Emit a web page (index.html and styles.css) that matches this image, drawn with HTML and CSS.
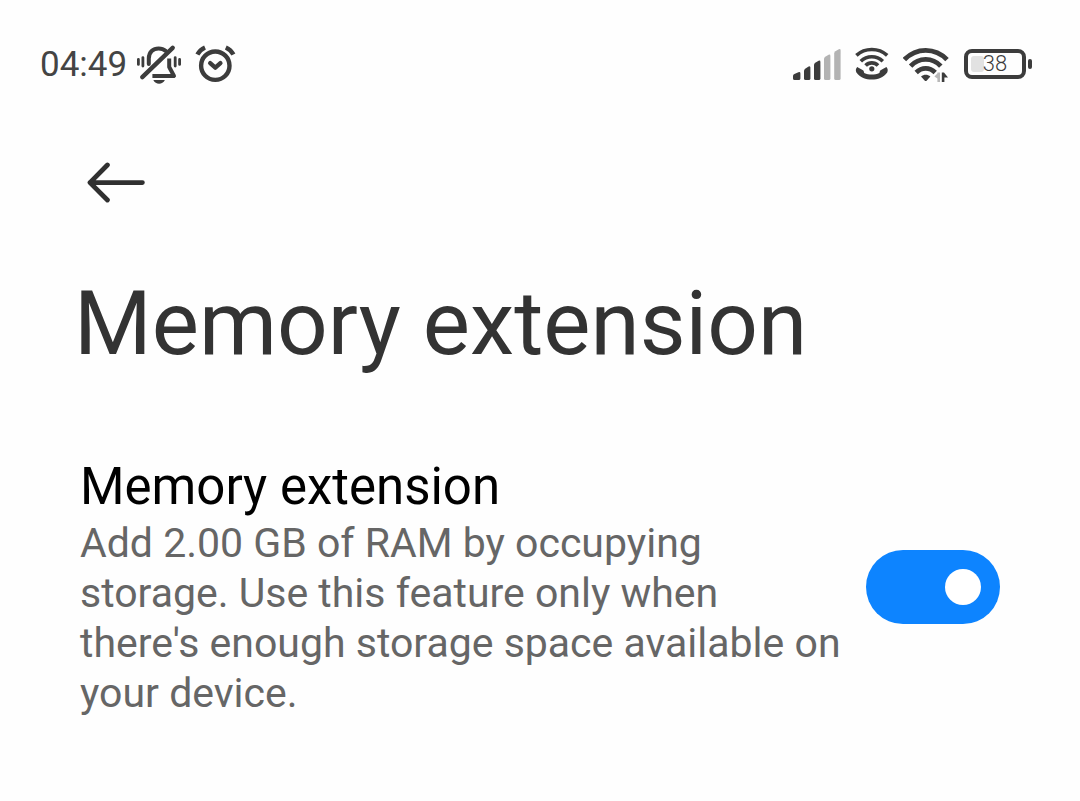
FILE: index.html
```html
<!DOCTYPE html>
<html lang="en">
<head>
    <meta charset="UTF-8">
    <meta name="viewport" content="width=device-width, initial-scale=1.0">
    <title>Memory extension</title>
    <link rel="stylesheet" href="styles.css">
</head>
<body>

    <!-- Status bar -->
    <div class="status-bar">
        <div class="status-left">
            <span class="time">04:49</span>
            <svg class="icon-bell" width="46" height="40" viewBox="0 0 46 40" fill="none" stroke="#3c3c3c" stroke-width="4" stroke-linecap="round">
                <path d="M12.8 20V14.5C12.8 8 17.2 4.4 22.6 4.4C25.5 4.4 28 5.4 29.8 7"/>
                <path d="M36.7 3.8L6.3 33.2" stroke-width="4.4"/>
                <path d="M33.2 14.5V23L38 32H16.4" stroke-linejoin="round" stroke-linecap="butt"/>
                <path d="M17.3 36H28.9C27.5 38.6 25.5 39.8 23.1 39.8C20.7 39.8 18.6 38.6 17.3 36Z" fill="#3c3c3c" stroke="none"/>
                <path d="M2.4 15.4V20.4M6.9 13.6V22M39.2 13.6V22M43.6 15.4V20.4" stroke-width="2.8"/>
            </svg>
            <svg class="icon-alarm" width="42" height="40" viewBox="0 0 42 40" fill="none" stroke="#3c3c3c" stroke-width="4.4">
                <circle cx="21.3" cy="21.7" r="14.2"/>
                <path d="M3.4 10.6C5 7.4 7.6 4.9 11 3.4M31.8 3.4C35.2 4.9 37.8 7.4 39.4 10.6"/>
                <path d="M16.2 19.2L21.3 23.6L26.4 19.2" stroke-linecap="round" stroke-linejoin="round"/>
            </svg>
        </div>
        <div class="status-right">
            <svg width="48" height="40" viewBox="0 0 48 40" fill="#3c3c3c">
                <path d="M0 32Q0 30.6 1.4 30L5.4 28.2Q7.4 27.4 7.4 29.4V34.4Q7.4 36 5.8 36H1.6Q0 36 0 34.4Z"/>
                <path d="M11 27Q11 25.6 12.2 24.8L15.6 22.6Q17.4 21.6 17.4 23.8V34.4Q17.4 36 15.8 36H12.6Q11 36 11 34.4Z"/>
                <path d="M21 21Q21 19.6 22.2 18.8L25.6 16.8Q27.4 16 27.4 18V34.4Q27.4 36 25.8 36H22.6Q21 36 21 34.4Z"/>
                <g fill="#b3b3b3">
                    <path d="M31 15Q31 13.6 32.2 12.8L35.6 10.8Q37.4 10 37.4 12V34.4Q37.4 36 35.8 36H32.6Q31 36 31 34.4Z"/>
                    <path d="M41.2 9.4Q41.2 8 42.4 7.2L45.8 5.2Q47.6 4.4 47.6 6.4V34.4Q47.6 36 46 36H42.8Q41.2 36 41.2 34.4Z"/>
                </g>
            </svg>
            <svg class="icon-call" width="34" height="40" viewBox="0 0 34 40" fill="none" stroke="#3c3c3c" stroke-width="3.6">
                <path d="M1.4 11.4C10 3.5 23.6 3.5 32.2 11.4"/>
                <path d="M5.8 17.2C12 11.2 21.6 11.2 27.8 17.2"/>
                <path d="M10.6 21.6C14 18 19.6 18 23 21.6"/>
                <circle cx="16.8" cy="24.8" r="2.6" fill="#3c3c3c" stroke="none"/>
                <path d="M2.2 23L8 26.2C8.8 26.8 9 27.8 9.2 29C14 31 19.6 31 24.4 29C24.6 27.8 24.8 26.8 25.6 26.2L31.4 23C32.8 24.4 33.2 26.8 32.2 28.4C24.8 38 8.8 38 1.4 28.4C.4 26.8 .8 24.4 2.2 23Z" fill="#3c3c3c" stroke="none"/>
            </svg>
            <svg class="icon-wifi" width="46" height="40" viewBox="0 0 46 40" fill="none" stroke="#3c3c3c" stroke-width="4.8">
                <path d="M1.4 15.6C13.2 3.2 32.2 3.2 44 15.6"/>
                <path d="M7.6 22.2C16 13.2 29.4 13.2 37.8 22.2"/>
                <path d="M13.2 28.4C18.8 23 26.6 23 32.2 28.4"/>
                <path d="M18 32.4C20.8 30.2 24.6 30.2 27.4 32.4L23.8 36.4Q22.7 37.5 21.6 36.4Z" fill="#3c3c3c" stroke="none"/>
                <path d="M31.4 32.6L34.4 29.4V28.6H37V38H34.4V34.4Z" fill="#b8b8b8" stroke="none"/>
                <path d="M38.8 38V28.4H41L45 33.4H41.4V38Z" fill="#3c3c3c" stroke="none"/>
            </svg>
            <div class="battery"><span class="battery-level"></span><span class="battery-text">38</span></div>
        </div>
    </div>

    <button class="back" type="button" aria-label="Back">
        <svg width="60" height="42" viewBox="0 0 60 42" fill="none" stroke="#303030" stroke-width="4.8" stroke-linecap="round" stroke-linejoin="round">
            <path d="M21.4 3L4 20.6L21.4 38M4 20.6H56.4"/>
        </svg>
    </button>

    <h1>Memory extension</h1>

    <!-- Setting row -->
    <div class="setting">
        <label class="setting-text" for="memory">
            <span class="setting-title">Memory extension</span>
            <span class="setting-desc">Add 2.00 GB of RAM by occupying<br>storage. Use this feature only when<br>there's enough storage space available on<br>your device.</span>
        </label>
        <input class="switch" type="checkbox" id="memory" checked>
    </div>

</body>
</html>
```
FILE: styles.css
```css
body {
    font-family: Roboto, Arial, sans-serif;
    margin: 0;
    background-color: #fefefe;
    color: #333;
}
svg {
    display: block;
}
.status-bar {
    display: flex;
    justify-content: space-between;
    align-items: center;
    height: 128px;
    padding: 0 48px 0 40px;
}
.status-left,
.status-right {
    display: flex;
    align-items: center;
}
.time {
    width: 88px;
    font-size: 35px;
    color: #444;
}
.icon-bell {
    margin-left: 8px;
}
.icon-alarm {
    margin-left: 12px;
}
.icon-call {
    margin-left: 14px;
}
.icon-wifi {
    margin-left: 14px;
}
.battery {
    position: relative;
    box-sizing: border-box;
    width: 62px;
    height: 30px;
    margin-left: 15px;
    margin-right: 6px;
    border: 4px solid #3c3c3c;
    border-radius: 8px;
}
.battery::after {
    content: "";
    position: absolute;
    top: 6px;
    right: -10px;
    width: 4px;
    height: 10px;
    border-radius: 2px;
    background-color: #3c3c3c;
}
.battery-level {
    position: absolute;
    top: 3px;
    left: 3px;
    width: 13px;
    height: 16px;
    border-radius: 3px;
    background-color: #e2e2e2;
}
.battery-text {
    position: relative;
    display: block;
    font-size: 22px;
    font-weight: 300;
    line-height: 22px;
    text-align: center;
    color: #3c3c3c;
}
.back {
    display: block;
    margin: 34px 0 0 86px;
    padding: 0;
    border: none;
    background: none;
    cursor: pointer;
}
h1 {
    margin: 68px 74px 0;
    font-size: 89px;
    font-weight: 400;
    line-height: 104px;
}
.setting {
    display: flex;
    align-items: center;
    justify-content: space-between;
    gap: 24px;
    margin-top: 80px;
    padding: 0 80px;
}
.setting-text {
    flex: 1;
}
.setting-title {
    display: block;
    font-size: 51px;
    line-height: 62px;
    color: #000;
}
.setting-desc {
    display: block;
    font-size: 41px;
    line-height: 50px;
    color: #666;
}
.switch {
    appearance: none;
    flex: none;
    position: relative;
    width: 134px;
    height: 74px;
    margin: 0;
    border-radius: 37px;
    background-color: #ccc;
    cursor: pointer;
}
.switch::before {
    content: "";
    position: absolute;
    top: 19px;
    left: 19px;
    width: 36px;
    height: 36px;
    border-radius: 50%;
    background-color: #fff;
}
.switch:checked {
    background-color: #0d84ff;
}
.switch:checked::before {
    left: 79px;
}
```
